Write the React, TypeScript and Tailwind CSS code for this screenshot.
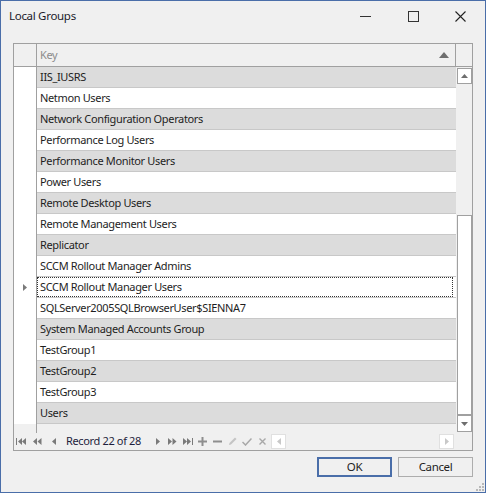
import React from 'react';

const rows = [
  'IIS_IUSRS',
  'Netmon Users',
  'Network Configuration Operators',
  'Performance Log Users',
  'Performance Monitor Users',
  'Power Users',
  'Remote Desktop Users',
  'Remote Management Users',
  'Replicator',
  'SCCM Rollout Manager Admins',
  'SCCM Rollout Manager Users',
  'SQLServer2005SQLBrowserUser$SIENNA7',
  'System Managed Accounts Group',
  'TestGroup1',
  'TestGroup2',
  'TestGroup3',
  'Users',
];

const focused = 10;
const font = { fontFamily: '"Noto Sans", "Liberation Sans", sans-serif' };

function Tri({ dir, color = '#7a7a7a' }: { dir: 'l' | 'r'; color?: string }) {
  return (
    <svg width="4" height="7" viewBox="0 0 4 7">
      {dir === 'l' ? <path d="M4 0 L0 3.5 L4 7 Z" fill={color} /> : <path d="M0 0 L4 3.5 L0 7 Z" fill={color} />}
    </svg>
  );
}

export default function App() {
  return (
    <div
      className="relative w-[486px] h-[493px] border border-[#4a6ea9] bg-[#f0f0f0] flex flex-col text-[11px] tracking-[-0.35px] text-[#1e1e1e]"
      style={font}
    >
      {/* title bar */}
      <div className="h-[30px] flex items-center">
        <span className="pl-2 text-[11.5px] tracking-[-0.3px] text-[#1b1b2a]">Local Groups</span>
        <div className="flex-1" />
        <div className="w-[48px] flex justify-center">
          <div className="w-[11px] h-px bg-[#333]" />
        </div>
        <div className="w-[48px] flex justify-center">
          <div className="w-[11px] h-[11px] border border-[#333]" />
        </div>
        <div className="w-[48px] flex justify-center pr-[1px]">
          <svg width="11" height="11" viewBox="0 0 11 11">
            <path d="M0.5 0.5 L10.5 10.5 M10.5 0.5 L0.5 10.5" stroke="#222" strokeWidth="1.1" />
          </svg>
        </div>
      </div>

      {/* grid */}
      <div className="mt-[12px] ml-[12px] w-[460px] h-[408px] border border-[#a0a0a0] bg-[#f0f0f0] flex flex-col">
        {/* header */}
        <div className="h-[23px] flex border-b border-[#a0a0a0]">
          <div className="w-[23px] border-r border-[#a0a0a0]" />
          <div className="flex-1 flex items-center border-r border-[#a0a0a0] pl-[3px] pr-[6px]">
            <span className="text-[#8c8c8c] flex-1">Key</span>
            <svg width="10" height="6" viewBox="0 0 10 6">
              <path d="M5 0 L10 6 L0 6 Z" fill="#6e6e6e" />
            </svg>
          </div>
          <div className="w-[16px]" />
        </div>

        {/* body */}
        <div className="h-[366px] flex">
          <div className="flex-1 flex flex-col">
            {rows.map((r, i) => (
              <div key={r} className="h-[21px] flex">
                <div className="w-[23px] bg-white border-r border-[#a0a0a0] flex items-center justify-center">
                  {i === focused && <Tri dir="r" />}
                </div>
                <div
                  className={
                    'flex-1 flex items-center pl-[3px] border-b border-[#c8c8c8] ' +
                    (i === focused ? 'bg-white' : i % 2 === 0 ? 'bg-[#dcdcdc]' : 'bg-white')
                  }
                >
                  {i === focused ? (
                    <div className="w-full h-full flex items-center border border-dotted border-[#333] -ml-[3px] pl-[2px]">
                      {r}
                    </div>
                  ) : (
                    r
                  )}
                </div>
              </div>
            ))}
            <div className="flex-1 flex">
              <div className="w-[23px] border-r border-[#a0a0a0]" />
            </div>
          </div>

          {/* vertical scrollbar */}
          <div className="w-[16px] flex flex-col items-center pt-px pb-px">
            <div className="w-[15px] h-[16px] bg-white border border-[#a0a0a0] flex items-center justify-center">
              <svg width="7" height="4" viewBox="0 0 7 4">
                <path d="M3.5 0 L7 4 L0 4 Z" fill="#6e6e6e" />
              </svg>
            </div>
            <div className="flex-1 w-[15px] flex flex-col justify-end">
              <div className="h-[200px] bg-white border border-[#a0a0a0]" />
            </div>
            <div className="w-[15px] h-[17px] bg-white border border-[#a0a0a0] flex items-center justify-center">
              <svg width="7" height="4" viewBox="0 0 7 4">
                <path d="M0 0 L7 0 L3.5 4 Z" fill="#6e6e6e" />
              </svg>
            </div>
          </div>
        </div>

        {/* navigator */}
        <div className="h-[17px] flex items-center pl-[2px]">
          <svg width="11" height="7" viewBox="0 0 11 7">
            <rect x="0" y="0" width="1" height="7" fill="#7a7a7a" />
            <path d="M6 0 L2 3.5 L6 7 Z M10 0 L6 3.5 L10 7 Z" fill="#7a7a7a" />
          </svg>
          <svg width="9" height="7" viewBox="0 0 9 7" className="ml-[6px]">
            <path d="M4 0 L0 3.5 L4 7 Z M8.5 0 L4.5 3.5 L8.5 7 Z" fill="#7a7a7a" />
          </svg>
          <div className="ml-[10px]">
            <Tri dir="l" />
          </div>
          <span className="ml-[10px] w-[78px] whitespace-nowrap text-[#1e1e3c]">Record 22 of 28</span>
          <div className="ml-[12px]">
            <Tri dir="r" />
          </div>
          <svg width="9" height="7" viewBox="0 0 9 7" className="ml-[8px]">
            <path d="M0 0 L4 3.5 L0 7 Z M4.5 0 L8.5 3.5 L4.5 7 Z" fill="#7a7a7a" />
          </svg>
          <svg width="11" height="7" viewBox="0 0 11 7" className="ml-[6px]">
            <path d="M0 0 L4 3.5 L0 7 Z M4 0 L8 3.5 L4 7 Z" fill="#7a7a7a" />
            <rect x="9" y="0" width="1" height="7" fill="#7a7a7a" />
          </svg>
          <svg width="9" height="9" viewBox="0 0 9 9" className="ml-[4px]">
            <path d="M0 3.5 H9 V5.5 H0 Z M3.5 0 H5.5 V9 H3.5 Z" fill="#8e8e8e" />
          </svg>
          <svg width="9" height="9" viewBox="0 0 9 9" className="ml-[6px]">
            <path d="M0 3.5 H9 V5.5 H0 Z" fill="#8e8e8e" />
          </svg>
          <svg width="9" height="9" viewBox="0 0 9 9" className="ml-[6px]">
            <path d="M1 8 L1.5 6 L7 0.5 L8.5 2 L3 7.5 Z" fill="#c4c4c4" />
          </svg>
          <svg width="10" height="8" viewBox="0 0 10 8" className="ml-[5px]">
            <path d="M0.5 4 L3.5 7 L9.5 0.5" stroke="#a8a8a8" strokeWidth="1.5" fill="none" />
          </svg>
          <svg width="7" height="7" viewBox="0 0 7 7" className="ml-[7px]">
            <path d="M0.5 0.5 L6.5 6.5 M6.5 0.5 L0.5 6.5" stroke="#a8a8a8" strokeWidth="1.4" />
          </svg>
          {/* horizontal scrollbar */}
          <div className="ml-[5px] flex-1 h-[15px] flex items-center justify-between pr-[1px]">
            <div className="w-[15px] h-[15px] bg-white border border-[#e0e0e0] flex items-center justify-center">
              <Tri dir="l" color="#c8c8c8" />
            </div>
            <div className="w-[15px] h-[15px] bg-white border border-[#e0e0e0] flex items-center justify-center">
              <Tri dir="r" color="#c8c8c8" />
            </div>
          </div>
          <div className="w-[17px]" />
        </div>
      </div>

      {/* buttons */}
      <div className="mt-[6px] flex justify-end gap-[6px] pr-[12px]">
        <button className="w-[75px] h-[20px] border-2 border-[#4a6ea9] bg-[#f0f0f0] text-[11.5px] text-[#1e1e1e] flex items-center justify-center">
          OK
        </button>
        <button className="w-[75px] h-[20px] border border-[#adadad] bg-[#f0f0f0] text-[11.5px] text-[#1e1e1e] flex items-center justify-center">
          Cancel
        </button>
      </div>

      {/* size grip */}
      <svg width="8" height="8" viewBox="0 0 8 8" className="absolute right-[1px] bottom-[1px]">
        <g fill="#b8b8b8">
          <rect x="6" y="0" width="2" height="2" />
          <rect x="3" y="3" width="2" height="2" />
          <rect x="6" y="3" width="2" height="2" />
          <rect x="0" y="6" width="2" height="2" />
          <rect x="3" y="6" width="2" height="2" />
          <rect x="6" y="6" width="2" height="2" />
        </g>
      </svg>
    </div>
  );
}
